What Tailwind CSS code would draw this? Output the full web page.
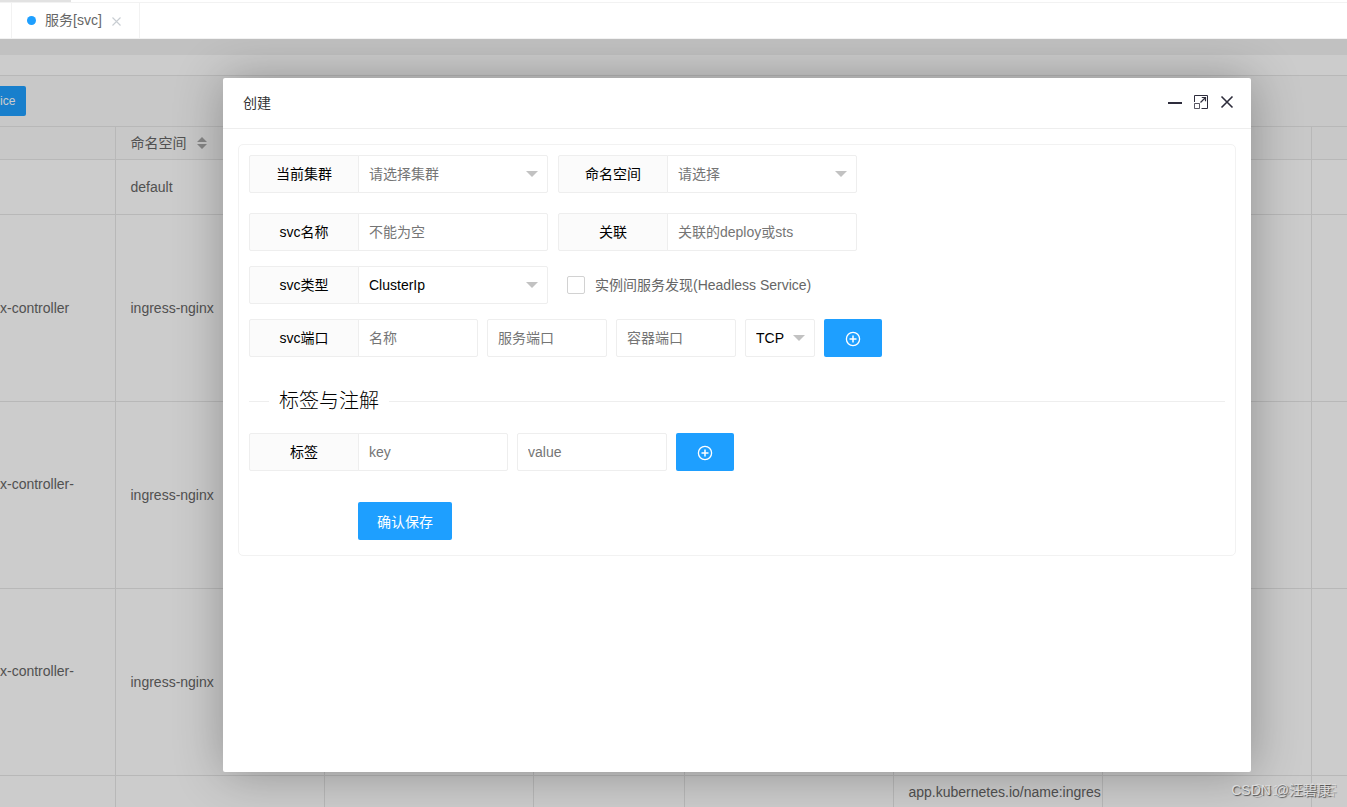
<!DOCTYPE html>
<html lang="zh-CN">
<head>
<meta charset="utf-8">
<title>服务[svc]</title>
<script src="https://cdn.jsdelivr.net/npm/@tailwindcss/browser@4"></script>
</head>
<body class="flex h-screen flex-col overflow-hidden bg-white font-['Liberation_Sans','Noto_Sans_CJK_SC',sans-serif] text-sm text-[#666]">
  <!-- Page tabs -->
  <div class="h-[2px] shrink-0"><div class="h-full w-[71px] bg-[#e2e2e2]"></div></div>
  <nav class="flex h-[37px] shrink-0 border-y border-[#f2f2f2] pl-[11px]">
    <div class="flex w-[129px] items-center border-x border-[#f2f2f2] pb-px pl-[15px]">
      <span class="mr-[9px] size-[9px] rounded-full bg-[#1e9fff]"></span>
      <a href="#" class="leading-5">服务[svc]</a>
      <button type="button" aria-label="关闭标签" class="mt-[3px] ml-[10px]">
        <svg class="size-[9px]" viewBox="0 0 9 9" fill="none" stroke="#c8cdd2" stroke-width="1.1"><path d="M.5.5l8 8M8.5.5l-8 8"/></svg>
      </button>
    </div>
  </nav>

  <div class="relative min-h-0 flex-1 overflow-hidden bg-[#f2f2f2] pt-4">
    <div class="h-full bg-white">
      <div class="h-5"></div>
      <div class="flex h-[51px] items-center border-t border-[#e6e6e6] bg-[#fafafa]">
        <button type="button" class="h-[30px] w-[26px] rounded-r-xs bg-[#1e9fff] text-left text-xs text-white">ice</button>
      </div>
      <table class="w-full table-fixed border-collapse text-left">
        <colgroup><col class="w-[115px]"><col class="w-[209px]"><col class="w-[209px]"><col class="w-[151px]"><col class="w-[209px]"><col class="w-[209px]"><col class="w-[209px]"><col></colgroup>
        <thead class="bg-[#fafafa]">
          <tr class="h-[33px] border-y border-[#e6e6e6] *:border-r *:border-[#e6e6e6] *:last:border-r-0">
            <th></th>
            <th class="pl-[15px] font-normal">
              <span class="flex items-center gap-[10px]">命名空间
                <svg class="h-3 w-[10px]" viewBox="0 0 10 12" fill="#a8a8a8"><path d="M5 0l5 5H0zM5 12l5-5H0z"/></svg>
              </span>
            </th>
            <th></th><th></th><th></th><th></th><th></th><th></th>
          </tr>
        </thead>
        <tbody>
          <tr class="h-[55px] border-b border-[#e6e6e6] *:border-r *:border-[#e6e6e6] *:last:border-r-0">
            <td></td><td class="pl-[15px]">default</td><td></td><td></td><td></td><td></td><td></td><td></td>
          </tr>
          <tr class="h-[187px] border-b border-[#e6e6e6] *:border-r *:border-[#e6e6e6] *:last:border-r-0">
            <td>x-controller</td><td class="pl-[15px]">ingress-nginx</td><td></td><td></td><td></td><td></td><td></td><td></td>
          </tr>
          <tr class="h-[187px] border-b border-[#e6e6e6] *:border-r *:border-[#e6e6e6] *:last:border-r-0">
            <td class="leading-[22px]">x-controller-<br>&nbsp;</td><td class="pl-[15px]">ingress-nginx</td><td></td><td></td><td></td><td></td><td></td><td></td>
          </tr>
          <tr class="h-[187px] border-b border-[#e6e6e6] *:border-r *:border-[#e6e6e6] *:last:border-r-0">
            <td class="leading-[22px]">x-controller-<br>&nbsp;</td><td class="pl-[15px]">ingress-nginx</td><td></td><td></td><td></td><td></td><td></td><td></td>
          </tr>
          <tr class="h-[187px] align-top *:border-r *:border-[#e6e6e6] *:last:border-r-0">
            <td></td><td></td><td></td><td></td><td></td>
            <td class="pt-[6px] pl-[15px] whitespace-nowrap">app.kubernetes.io/name:ingres</td><td></td><td></td>
          </tr>
        </tbody>
      </table>
    </div>

    <div class="absolute inset-0 bg-black/20"></div>

    <!-- Create dialog -->
    <section role="dialog" aria-labelledby="dlg-title" class="absolute top-[39px] right-24 bottom-[35px] left-[223px] rounded-xs bg-white shadow-[1px_1px_50px_rgba(0,0,0,0.3)]">
      <header class="flex h-[51px] items-center border-b border-[#eee] px-5">
        <h1 id="dlg-title" class="flex-1 text-[#333]">创建</h1>
        <div class="mr-[-3px] flex items-center gap-3 pb-[2px] text-[#2e2d3c]">
          <button type="button" aria-label="最小化"><svg class="size-[14px]" viewBox="0 0 14 14" fill="currentColor"><path d="M0 7h14v2H0z"/></svg></button>
          <button type="button" aria-label="最大化"><svg class="size-[14px]" viewBox="0 0 14 14" fill="none" stroke="currentColor"><path d="M.5 7V.5h13v13H7.5" stroke-width="1"/><path d="M.5 8.5h5v5h-5z" stroke-opacity=".8"/><path d="M6.5 7.5l5-5M7.8 2.5h3.7v3.7" stroke-width="1.2"/></svg></button>
          <button type="button" aria-label="关闭"><svg class="size-[14px]" viewBox="0 0 14 14" fill="none" stroke="currentColor" stroke-width="1.6"><path d="M1.5 1.5l11 11M12.5 1.5l-11 11"/></svg></button>
        </div>
      </header>

      <form class="m-[15px] rounded-[5px] border border-[#f2f2f2] px-[10px] pt-[10px] pb-[15px]">
        <div class="flex gap-[10px]">
          <div class="flex">
            <label for="cluster" class="h-[38px] w-[110px] rounded-l-xs border border-[#eee] bg-[#fbfbfb] text-center leading-9 text-black">当前集群</label>
            <div class="relative -ml-px w-[190px]">
              <select id="cluster" class="h-[38px] w-full appearance-none rounded-r-xs border border-[#eee] bg-white px-[10px] text-[#757575]"><option>请选择集群</option></select>
              <svg class="pointer-events-none absolute top-4 right-[10px] h-[6px] w-3" viewBox="0 0 12 6" fill="#c2c2c2"><path d="M0 0h12L6 6z"/></svg>
            </div>
          </div>
          <div class="flex">
            <label for="ns" class="h-[38px] w-[110px] rounded-l-xs border border-[#eee] bg-[#fbfbfb] text-center leading-9 text-black">命名空间</label>
            <div class="relative -ml-px w-[190px]">
              <select id="ns" class="h-[38px] w-full appearance-none rounded-r-xs border border-[#eee] bg-white px-[10px] text-[#757575]"><option>请选择</option></select>
              <svg class="pointer-events-none absolute top-4 right-[10px] h-[6px] w-3" viewBox="0 0 12 6" fill="#c2c2c2"><path d="M0 0h12L6 6z"/></svg>
            </div>
          </div>
        </div>

        <div class="mt-5 flex gap-[10px]">
          <div class="flex">
            <label for="name" class="h-[38px] w-[110px] rounded-l-xs border border-[#eee] bg-[#fbfbfb] text-center leading-9 text-black">svc名称</label>
            <input id="name" type="text" placeholder="不能为空" class="-ml-px h-[38px] w-[190px] rounded-r-xs border border-[#eee] px-[10px] placeholder:text-[#757575]">
          </div>
          <div class="flex">
            <label for="rel" class="h-[38px] w-[110px] rounded-l-xs border border-[#eee] bg-[#fbfbfb] text-center leading-9 text-black">关联</label>
            <input id="rel" type="text" placeholder="关联的deploy或sts" class="-ml-px h-[38px] w-[190px] rounded-r-xs border border-[#eee] px-[10px] placeholder:text-[#757575]">
          </div>
        </div>

        <div class="mt-[15px] flex items-center">
          <label for="type" class="h-[38px] w-[110px] rounded-l-xs border border-[#eee] bg-[#fbfbfb] text-center leading-9 text-black">svc类型</label>
          <div class="relative -ml-px w-[190px]">
            <select id="type" class="h-[38px] w-full appearance-none rounded-r-xs border border-[#eee] bg-white px-[10px] text-black"><option>ClusterIp</option></select>
            <svg class="pointer-events-none absolute top-4 right-[10px] h-[6px] w-3" viewBox="0 0 12 6" fill="#c2c2c2"><path d="M0 0h12L6 6z"/></svg>
          </div>
          <input id="headless" type="checkbox" class="ml-[19px] size-[18px] appearance-none rounded-xs border border-[#d2d2d2] bg-white">
          <label for="headless" class="ml-[10px]">实例间服务发现(Headless Service)</label>
        </div>

        <div class="mt-[15px] flex gap-[9px]">
          <div class="flex">
            <label for="pname" class="h-[38px] w-[110px] rounded-l-xs border border-[#eee] bg-[#fbfbfb] text-center leading-9 text-black">svc端口</label>
            <input id="pname" type="text" placeholder="名称" class="-ml-px h-[38px] w-[120px] rounded-r-xs border border-[#eee] px-[10px] placeholder:text-[#757575]">
          </div>
          <input type="text" aria-label="服务端口" placeholder="服务端口" class="h-[38px] w-[120px] rounded-xs border border-[#eee] px-[10px] placeholder:text-[#757575]">
          <input type="text" aria-label="容器端口" placeholder="容器端口" class="h-[38px] w-[120px] rounded-xs border border-[#eee] px-[10px] placeholder:text-[#757575]">
          <div class="relative w-[70px]">
            <select aria-label="协议" class="h-[38px] w-full appearance-none rounded-xs border border-[#eee] bg-white px-[10px] text-black"><option>TCP</option></select>
            <svg class="pointer-events-none absolute top-4 right-[10px] h-[6px] w-3" viewBox="0 0 12 6" fill="#c2c2c2"><path d="M0 0h12L6 6z"/></svg>
          </div>
          <button type="button" aria-label="添加端口" class="flex h-[38px] w-[58px] items-center justify-center rounded-xs bg-[#1e9fff] pt-[2px] text-white">
            <svg class="size-4" viewBox="0 0 16 16" fill="none" stroke="currentColor" stroke-width="1.3"><circle cx="8" cy="8" r="6.6"/><path d="M8 4.5v7M4.5 8h7" stroke-width="1.5"/></svg>
          </button>
        </div>

        <div class="mt-[29px] flex items-center gap-[10px]">
          <span class="h-px w-5 bg-[#eee]"></span>
          <h2 class="text-xl leading-[30px] font-light text-black">标签与注解</h2>
          <span class="h-px flex-1 bg-[#eee]"></span>
        </div>

        <div class="mt-[17px] flex gap-[9px]">
          <div class="flex">
            <label for="key" class="h-[38px] w-[110px] rounded-l-xs border border-[#eee] bg-[#fbfbfb] text-center leading-9 text-black">标签</label>
            <input id="key" type="text" placeholder="key" class="-ml-px h-[38px] w-[150px] rounded-r-xs border border-[#eee] px-[10px] placeholder:text-[#757575]">
          </div>
          <input type="text" aria-label="value" placeholder="value" class="h-[38px] w-[150px] rounded-xs border border-[#eee] px-[10px] placeholder:text-[#757575]">
          <button type="button" aria-label="添加标签" class="flex h-[38px] w-[58px] items-center justify-center rounded-xs bg-[#1e9fff] pt-[2px] text-white">
            <svg class="size-4" viewBox="0 0 16 16" fill="none" stroke="currentColor" stroke-width="1.3"><circle cx="8" cy="8" r="6.6"/><path d="M8 4.5v7M4.5 8h7" stroke-width="1.5"/></svg>
          </button>
        </div>

        <button type="submit" class="mt-[31px] ml-[109px] block h-[38px] rounded-xs bg-[#1e9fff] px-[19px] pt-[2px] text-white">确认保存</button>
      </form>
    </section>

    <!-- Watermarks -->
    <div class="pointer-events-none absolute right-[10px] bottom-[7px] text-sm whitespace-nowrap text-white/30 [text-shadow:1px_1px_0_rgba(0,0,0,0.2)]">@51CTO博客</div>
    <div class="pointer-events-none absolute right-4 bottom-[7px] text-sm whitespace-nowrap text-[#dcdcdc] [text-shadow:1px_1px_1px_rgba(0,0,0,0.6)]">CSDN @汪碧康</div>
  </div>
</body>
</html>
